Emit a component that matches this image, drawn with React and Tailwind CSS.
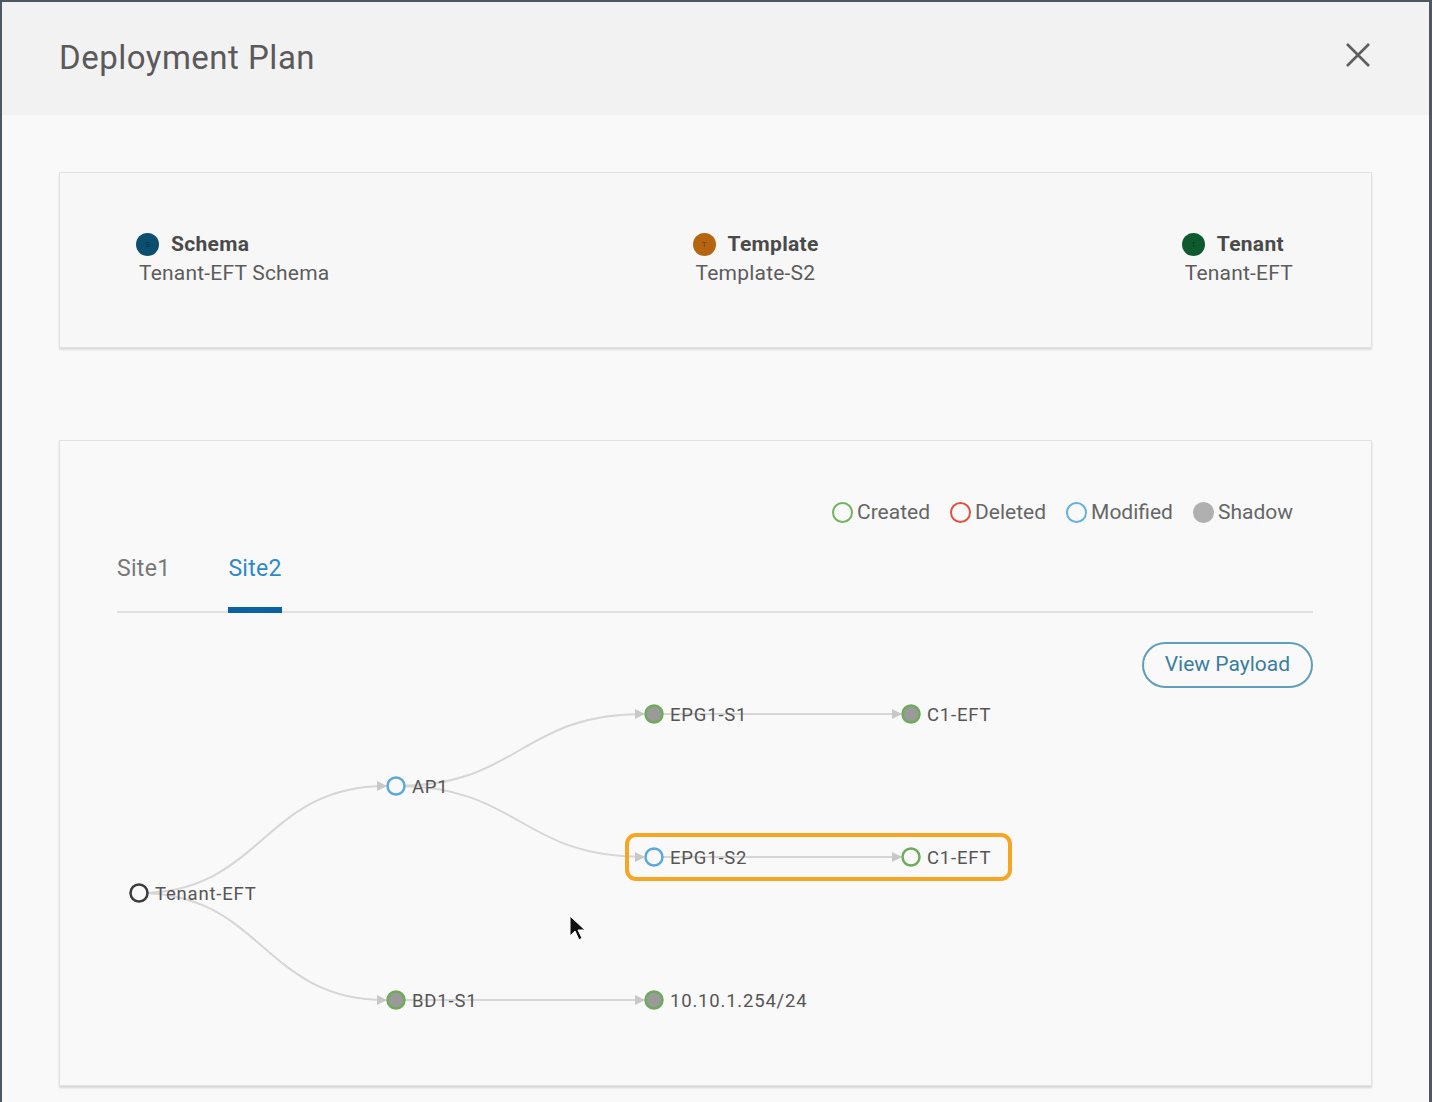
import React from "react";

const font = { fontFamily: "Roboto, 'Liberation Sans', sans-serif" };

function HeaderItem({ color, letter, title, value }) {
  return (
    <div className="flex flex-col">
      <div className="flex items-center gap-[12px]">
        <span
          className="w-[23px] h-[23px] rounded-full flex items-center justify-center text-[8px] text-black/40"
          style={{ backgroundColor: color }}
        >
          {letter}
        </span>
        <span className="text-[21px] font-bold text-[#4a4a4a] leading-none tracking-[0.3px]">{title}</span>
      </div>
      <span className="text-[21px] text-[#5c5c5c] mt-[7px] ml-[3px] leading-none tracking-[0.2px]">{value}</span>
    </div>
  );
}

function Legend({ ring, fill, label }) {
  return (
    <div className="flex items-center gap-[4px]">
      <span
        className="w-[21px] h-[21px] rounded-full border-[2.5px]"
        style={{ borderColor: ring, backgroundColor: fill }}
      />
      <span className="text-[21px] text-[#666666]">{label}</span>
    </div>
  );
}

// diagram coordinates: relative to graph area
const nodes = [
  { x: 22, y: 205, label: "Tenant-EFT", ring: "#3b3b3b", fill: "#f9f9f9" },
  { x: 279, y: 98, label: "AP1", ring: "#5aa9dc", fill: "#f9f9f9" },
  { x: 537, y: 26, label: "EPG1-S1", ring: "#6eab5a", fill: "#9a9a9a" },
  { x: 794, y: 26, label: "C1-EFT", ring: "#6eab5a", fill: "#9a9a9a" },
  { x: 537, y: 169, label: "EPG1-S2", ring: "#5aa9dc", fill: "#f9f9f9" },
  { x: 794, y: 169, label: "C1-EFT", ring: "#6eab5a", fill: "#f9f9f9" },
  { x: 279, y: 312, label: "BD1-S1", ring: "#6eab5a", fill: "#9a9a9a" },
  { x: 537, y: 312, label: "10.10.1.254/24", ring: "#6eab5a", fill: "#9a9a9a" },
];

const links = [
  [0, 1],
  [0, 6],
  [1, 2],
  [1, 4],
  [2, 3],
  [4, 5],
  [6, 7],
];

function linkPath(a, b) {
  const x0 = a.x;
  const y0 = a.y;
  const x1 = b.x - 10;
  const y1 = b.y;
  if (y0 === y1) return `M${x0},${y0} L${x1},${y1}`;
  const mx = (x0 + x1) / 2;
  return `M${x0},${y0} C${mx},${y0} ${mx},${y1} ${x1},${y1}`;
}

function Graph() {
  return (
    <svg width="1196" height="350" className="block">
      <defs>
        <marker id="arrow" viewBox="0 0 10 10" refX="9" refY="5" markerWidth="5" markerHeight="5" orient="auto">
          <path d="M0,0 L10,5 L0,10 z" fill="#c8c8c8" />
        </marker>
      </defs>
      {links.map(([s, t], i) => (
        <path
          key={i}
          d={linkPath(nodes[s], nodes[t])}
          fill="none"
          stroke="#d6d6d6"
          strokeWidth="2"
          markerEnd="url(#arrow)"
        />
      ))}
      <rect x="510" y="147" width="383" height="44" rx="9" fill="none" stroke="#f6a623" strokeWidth="4" />
      {nodes.map((n, i) => (
        <g key={i}>
          <circle cx={n.x} cy={n.y} r="8.5" fill={n.fill} stroke={n.ring} strokeWidth="2.5" />
          <text
            x={n.x + 16}
            y={n.y + 6.5}
            fontSize="18.5"
            fill="#555555"
            letterSpacing="0.8"
            style={font}
          >
            {n.label}
          </text>
        </g>
      ))}
      {/* mouse pointer */}
      <path
        d="M453,228 L453,248 L458,243 L462,252 L465,250 L461,242 L468,242 Z"
        fill="#111111"
        stroke="#ffffff"
        strokeWidth="1"
      />
    </svg>
  );
}

export default function App() {
  return (
    <div
      className="w-[1432px] h-[1102px] bg-[#f9f9f9] border-t-2 border-l-2 border-r-[3px] border-[#4d5862] overflow-hidden"
      style={font}
    >
      {/* HEADER */}
      <div className="h-[113px] bg-[#f2f2f2] flex items-center justify-between pl-[57px] pr-[58px]">
        <h1 className="text-[33px] text-[#5a5a5a] leading-none -mt-[2px] tracking-[0.5px]">Deployment Plan</h1>
        <svg width="26" height="26" viewBox="0 0 26 26" className="-mt-[8px]">
          <path d="M2,2 L24,24 M24,2 L2,24" stroke="#5e5e5e" strokeWidth="2.6" />
        </svg>
      </div>

      {/* SUMMARY CARD */}
      <div className="mx-[57px] mt-[57px] h-[176px] bg-[#f7f7f7] border border-[#e2e2e2] shadow-[0_2px_2px_rgba(0,0,0,0.12)] flex items-start justify-between pl-[76px] pr-[78px] pt-[60px]">
        <HeaderItem color="#0b4e70" letter="S" title="Schema" value="Tenant-EFT Schema" />
        <HeaderItem color="#b5640f" letter="T" title="Template" value="Template-S2" />
        <HeaderItem color="#0d5a2f" letter="T" title="Tenant" value="Tenant-EFT" />
      </div>

      {/* SITES CARD */}
      <div className="mx-[57px] mt-[92px] h-[646px] bg-[#f9f9f9] border border-[#e2e2e2] shadow-[0_2px_2px_rgba(0,0,0,0.14)] pl-[57px] pr-[58px] pt-[56px]">
        <div className="flex justify-end gap-[20px] pr-[20px]">
          <Legend ring="#71b35d" fill="transparent" label="Created" />
          <Legend ring="#e0533f" fill="transparent" label="Deleted" />
          <Legend ring="#65b0e0" fill="transparent" label="Modified" />
          <Legend ring="#b0b0b0" fill="#b0b0b0" label="Shadow" />
        </div>

        <div className="mt-[28px] flex gap-[58px] border-b-2 border-[#e0e0e0]">
          <div className="pb-[31px] text-[23px] text-[#777777] leading-none tracking-[0.3px]">Site1</div>
          <div className="pb-[25px] text-[23px] text-[#2f8ac4] leading-none tracking-[0.3px] border-b-[6px] border-[#0b62a3] -mb-[2px]">
            Site2
          </div>
        </div>

        <div className="flex justify-end mt-[29px]">
          <button className="h-[46px] px-[21px] rounded-full border-2 border-[#5f9fba] text-[21px] text-[#3a7ea0] bg-transparent">
            View Payload
          </button>
        </div>

        <Graph />
      </div>
    </div>
  );
}
